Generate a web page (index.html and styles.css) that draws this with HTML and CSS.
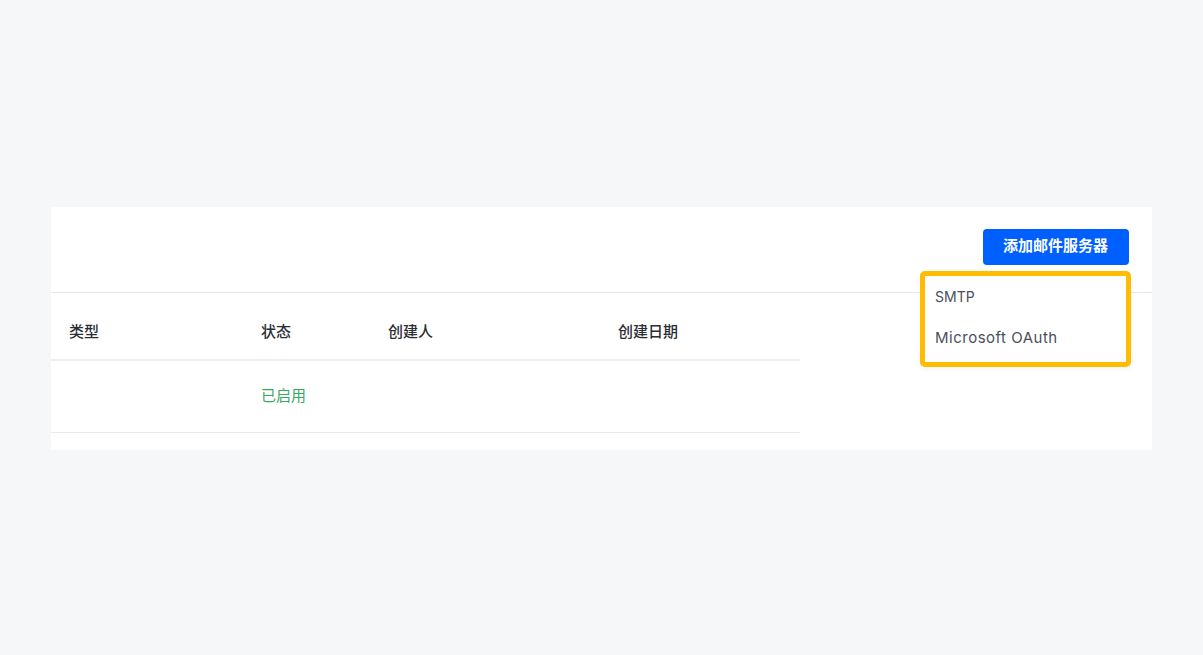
FILE: index.html
```html
<!DOCTYPE html>
<html lang="zh-CN">
<head>
    <meta charset="UTF-8">
    <meta name="viewport" content="width=device-width, initial-scale=1.0">
    <title>邮件服务器</title>
    <link rel="stylesheet" href="styles.css">
</head>
<body>
    <div class="card">
        <div class="card-header">
            <div class="add-wrap">
                <button class="add-btn">添加邮件服务器</button>
                <div class="dropdown">
                    <div class="dropdown-item item-short">SMTP</div>
                    <div class="dropdown-item">Microsoft OAuth</div>
                </div>
            </div>
        </div>
        <table class="server-table">
            <thead>
                <tr>
                    <th class="col-type">类型</th>
                    <th class="col-status">状态</th>
                    <th class="col-creator">创建人</th>
                    <th>创建日期</th>
                </tr>
            </thead>
            <tbody>
                <tr>
                    <td></td>
                    <td class="status-on">已启用</td>
                    <td></td>
                    <td></td>
                </tr>
            </tbody>
        </table>
    </div>
</body>
</html>
```

FILE: styles.css
```css
body {
    font-family: Inter, "Noto Sans CJK SC", sans-serif;
    background-color: #f6f7f9;
    margin: 0;
    padding: 207px 51px 0;
}
.card {
    background: white;
    height: 243px;
}
.card-header {
    display: flex;
    justify-content: flex-end;
    height: 86px;
    box-sizing: border-box;
    padding: 22px 23px 0 0;
    border-bottom: 1px solid #e8e9eb;
}
.add-wrap {
    position: relative;
}
.add-btn {
    display: block;
    width: 146px;
    height: 36px;
    padding: 0 1px 5px 0;
    background: #0060ff;
    color: white;
    border: none;
    border-radius: 4px;
    font-family: Inter, "Noto Sans CJK SC", sans-serif;
    font-size: 15px;
    font-weight: 600;
}
.dropdown {
    position: absolute;
    top: 42px;
    right: -2px;
    width: 211px;
    height: 96px;
    box-sizing: border-box;
    padding: 0 10px;
    background: white;
    border: 5px solid #ffbc00;
    border-radius: 5px;
    box-shadow: 0 2px 6px rgba(0, 0, 0, 0.05);
}
.dropdown-item {
    height: 41px;
    line-height: 41px;
    font-size: 15px;
    letter-spacing: 0.5px;
    color: #4a4f5c;
}
.item-short {
    font-size: 14px;
    letter-spacing: 0;
}
.server-table {
    width: 749px;
    table-layout: fixed;
    border-collapse: collapse;
    font-size: 15px;
}
.server-table th,
.server-table td {
    padding: 0 0 0 18px;
    text-align: left;
}
.server-table th {
    height: 57px;
    padding-top: 9px;
    font-weight: 500;
    color: #2b2e35;
    border-bottom: 2px solid #eeeeef;
}
.server-table td {
    height: 67px;
    padding-bottom: 4px;
    border-bottom: 1px solid #e8e9eb;
}
.col-type {
    width: 174px;
}
.col-status {
    width: 109px;
}
.col-creator {
    width: 212px;
}
.status-on {
    color: #35a862;
}
```
